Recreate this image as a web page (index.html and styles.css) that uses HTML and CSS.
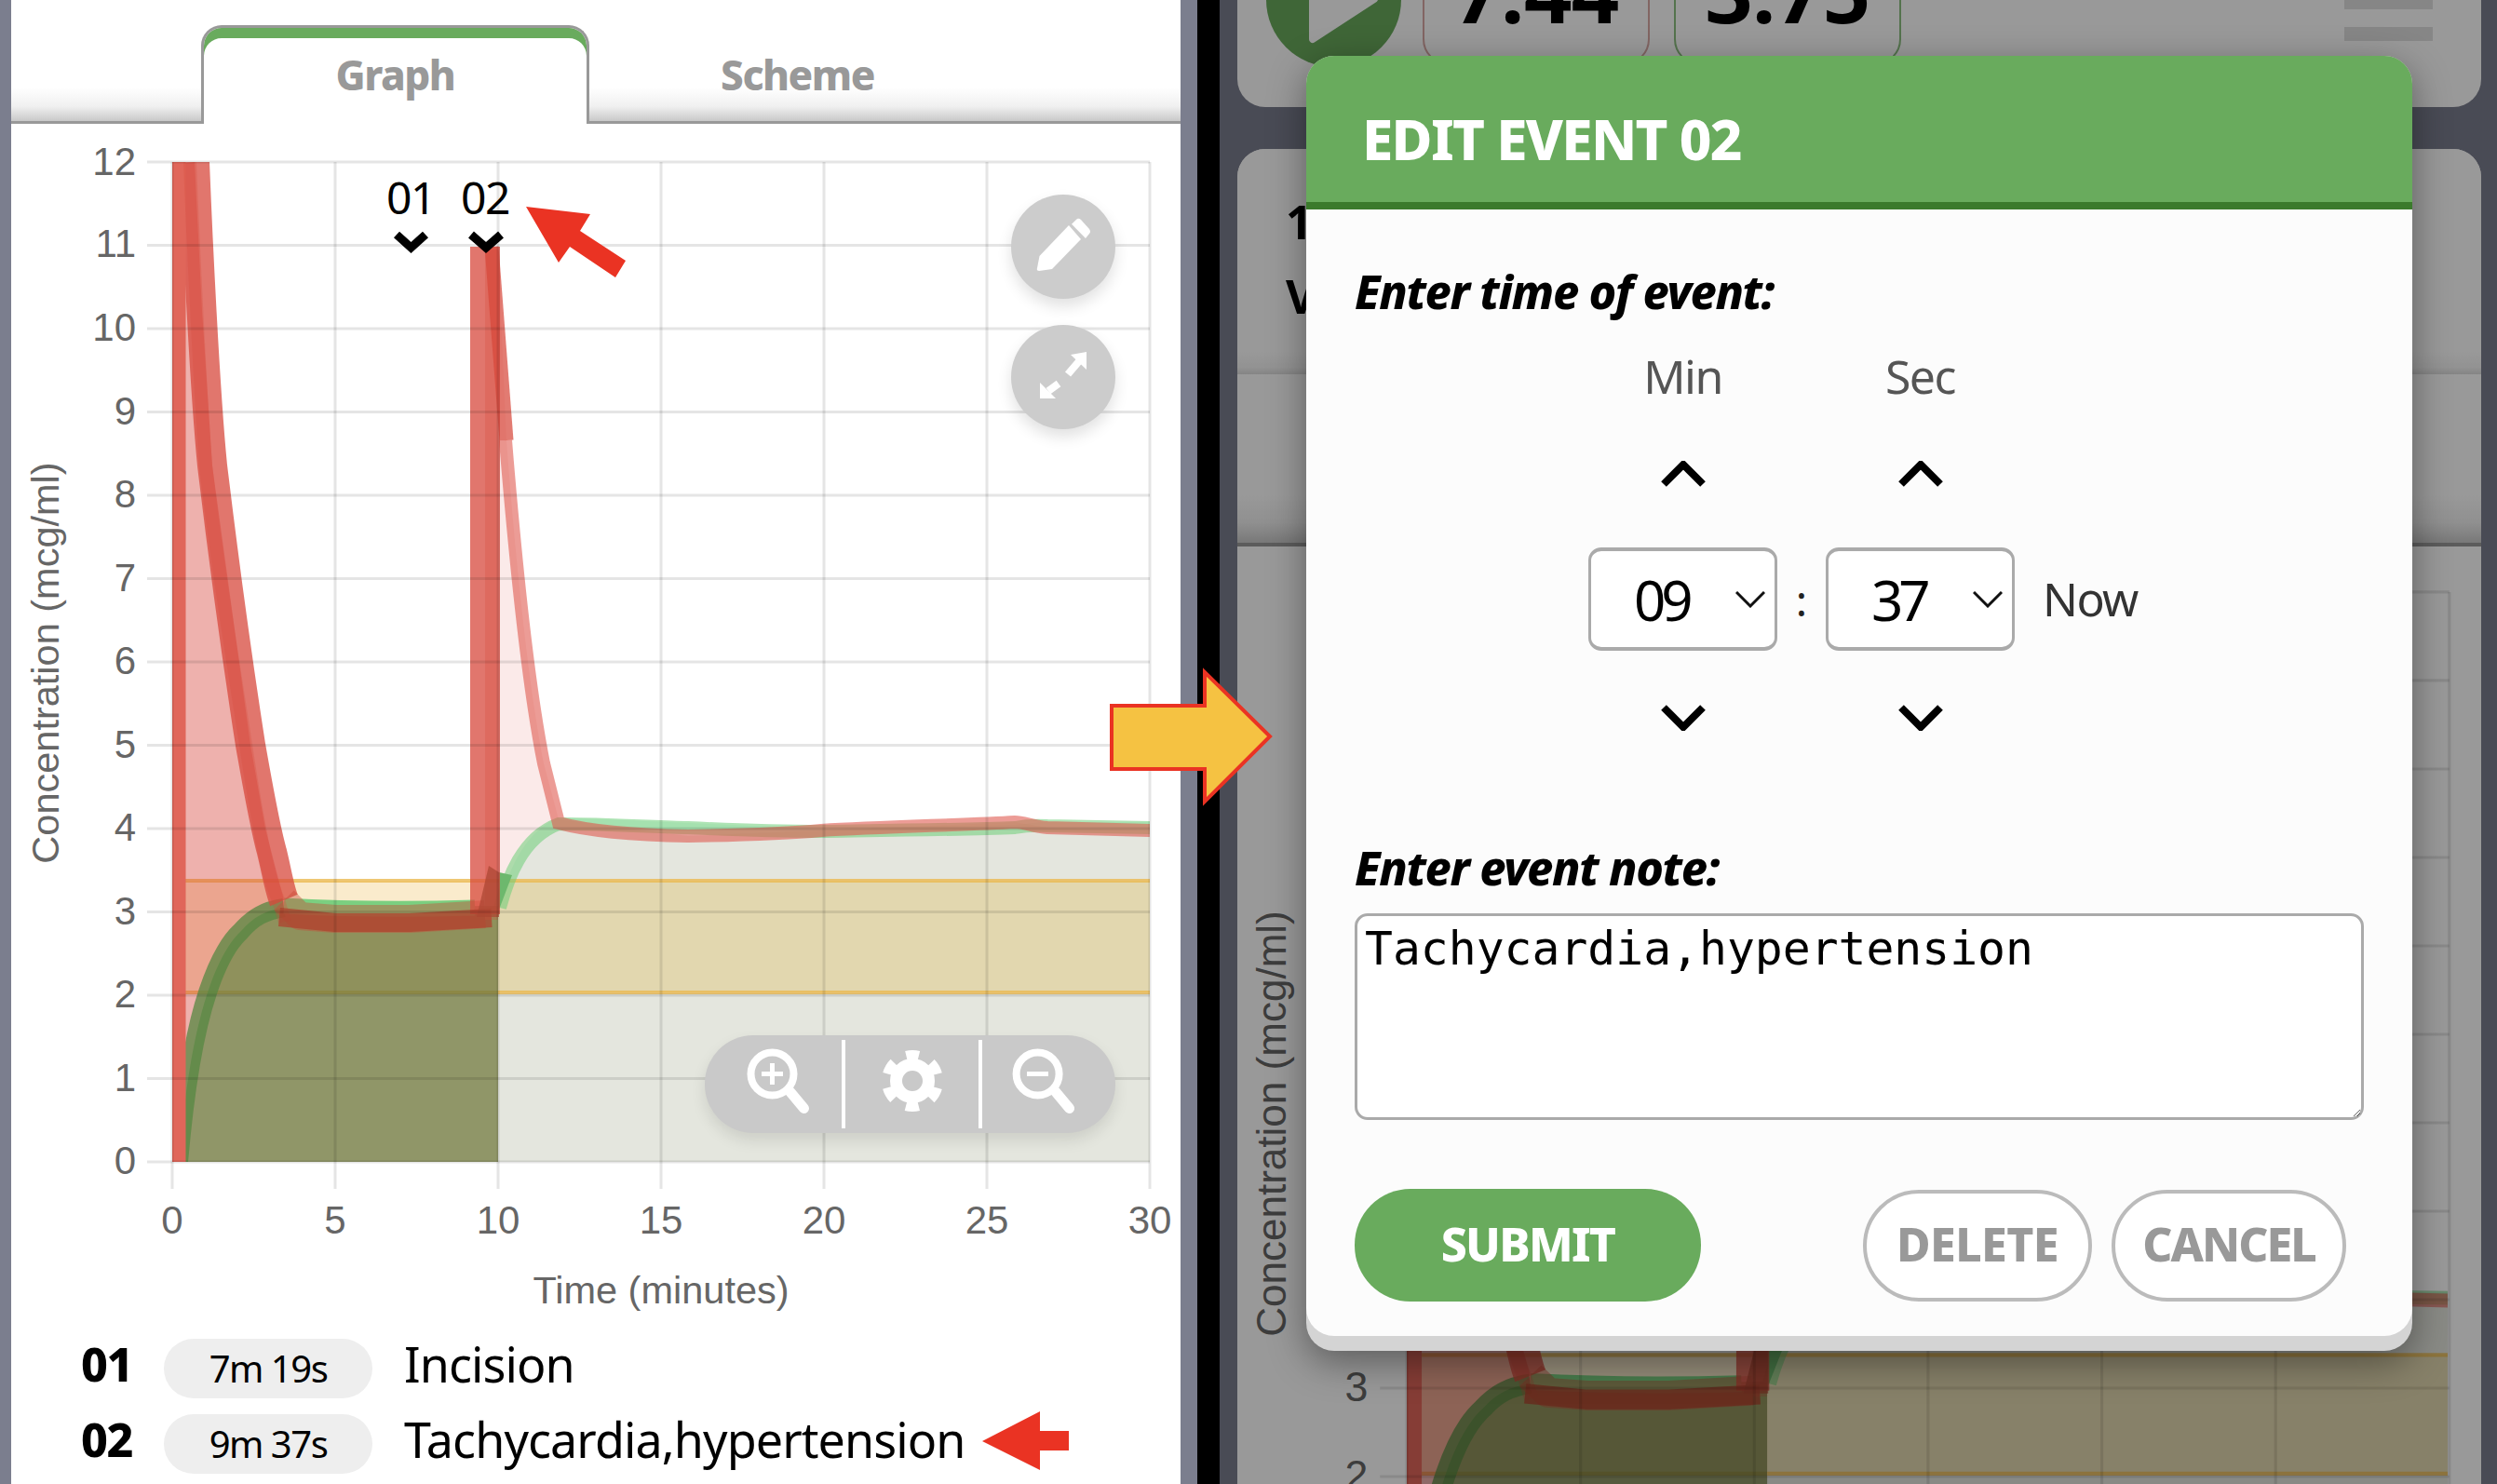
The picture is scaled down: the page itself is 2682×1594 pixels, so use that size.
FILE: index.html
```html
<!DOCTYPE html>
<html lang="en">
<head>
<meta charset="utf-8">
<title>Edit event</title>
<link rel="stylesheet" href="styles.css">
</head>
<body>
<div class="stage">
  <section class="phone-left">
    <nav class="tabs">
      <div class="tab tab-active">Graph</div>
      <div class="tab">Scheme</div>
    </nav>
    <div class="chart">
      <svg class="chart-svg" viewBox="12 133 1256 1290" width="1256" height="1290">
        <defs>
          <clipPath id="plotclip"><rect x="185" y="174" width="1050" height="1074"/></clipPath>
          <clipPath id="bgclip"><rect x="1511" y="632" width="1118" height="962"/></clipPath>
        </defs>
        <g id="plot-data" clip-path="url(#plotclip)">
          <rect class="band-pre" x="185" y="946" width="350" height="120"/>
          <path class="band-line" d="M185 946H535M185 1066H535"/>
          <path class="red-fill" d="M185 1248L192 174L209 174L217 333L228 500L269 800L285 890L305 967L320 982L535 982L535 1248Z"/>
          <path class="olive-fill" d="M192 1248C197 1190 205 1120 223 1066C235 1030 248 1010 259 1000C272 985 285 978 305 975L535 973L535 1248Z"/>
          <path class="pale-red" d="M535 267L544 473C555 620 570 750 584 820L600 880L739 898L882 892L1090 883L1125 889L1235 892L1235 1248L535 1248Z"/>
          <path class="pale-green" d="M535 977C545 940 560 895 600 878L739 884L882 890L1090 886L1119 883L1235 883L1235 1248L535 1248Z"/>
          <rect class="band-post" x="535" y="946" width="700" height="120"/>
          <path class="band-line" d="M535 946H1235M535 1066H1235"/>
          <path class="green-rise" d="M192 1248C197 1190 205 1120 223 1066C235 1030 248 1010 259 1000C272 985 285 978 305 975"/>
          <path class="green-flat" d="M305 973C360 976 440 977 510 975"/>
          <path class="green-post" d="M537 975C545 945 560 900 600 885C650 885 700 888 739 889C800 892 850 893 882 893C950 892 1040 891 1090 889C1100 887 1110 886 1125 887L1235 889"/>
          <polygon class="green-tip" points="536,937 550,940 536,977"/>
          <path class="red-post" d="M543 473C555 620 570 750 584 820L600 884C630 892 680 897 739 898C800 897 850 895 882 892C950 888 1040 886 1090 883C1100 883 1110 888 1125 889L1235 892"/>
          <path class="red-broad" d="M209 174C212 250 220 420 228 500C240 600 255 710 269 800C276 840 285 890 292 915C297 935 300 955 305 967"/>
          <path class="red-spike" d="M192 1248V174"/>
          <path class="red-flat" d="M305 967L322 984L360 987L440 987L521 982"/>
          <path class="red-broad" d="M521 982L521 265"/>
          <path class="red-peak" d="M528 265L544 473"/>
          <path class="red-inner" d="M204 174C207 250 215 420 221 500C232 600 250 710 264 800C270 840 276 875 280 895C285 925 292 950 299 967L306 990"/>
          <path class="red-low" d="M300 985L360 991L440 991L528 986"/>
          <path class="red-inner" d="M528 988L528 268"/>
          <polygon class="red-tip" points="525,930 536,937 536,985 512,985"/>
        </g>
        <g id="plot-frame">
          <path class="grid" d="M158 1248H1235M158 1158.5H1235M158 1069H1235M158 979.5H1235M158 890H1235M158 800.5H1235M158 711H1235M158 621.5H1235M158 532H1235M158 442.5H1235M158 353H1235M158 263.5H1235M158 174H1235"/>
          <path class="grid" d="M185 174V1277M360 174V1277M535 174V1277M710 174V1277M885 174V1277M1060 174V1277M1235 174V1277"/>
          <g class="tick ytick">
            <text x="146" y="1261">0</text><text x="146" y="1172">1</text><text x="146" y="1082">2</text><text x="146" y="993">3</text><text x="146" y="903">4</text><text x="146" y="814">5</text><text x="146" y="724">6</text><text x="146" y="635">7</text><text x="146" y="545">8</text><text x="146" y="456">9</text><text x="146" y="366">10</text><text x="146" y="276">11</text><text x="146" y="188">12</text>
          </g>
          <g class="tick xtick">
            <text x="185" y="1325">0</text><text x="360" y="1325">5</text><text x="535" y="1325">10</text><text x="710" y="1325">15</text><text x="885" y="1325">20</text><text x="1060" y="1325">25</text><text x="1235" y="1325">30</text>
          </g>
          <text class="axis-title" x="710" y="1400">Time (minutes)</text>
          <text class="axis-title" transform="translate(63 712) rotate(-90)">Concentration (mcg/ml)</text>
        </g>
        <g class="markers">
          <text x="441" y="230">01</text><text x="521" y="230">02</text>
          <path class="marker-chev" d="M426 252L441.500 266L457 252M506 252L522 266L538 252"/>
        </g>
      </svg>
      <button class="round-btn round-edit" aria-label="Edit">
        <svg viewBox="0 0 112 112" width="112" height="112"><path class="icon-fill" d="M30.500 66L62 33L75 48L44 80L30 82Q27 82 28 79Z"/><path class="icon-fill" d="M65 31.700L71 26Q73 25 75 27L84 37Q86 40 84 42L80 47Z"/></svg>
      </button>
      <button class="round-btn round-expand" aria-label="Expand">
        <svg viewBox="0 0 112 112" width="112" height="112"><polygon class="icon-fill" points="64,32 81,29 81,48"/><polygon class="icon-fill" points="31,62 31,79 48,79"/><path class="icon-line" d="M73 39L61 53M51 63L40 71"/></svg>
      </button>
      <div class="zoom-pill">
        <div class="zoom-cell">
          <svg viewBox="0 0 80 80" width="80" height="80"><circle class="mag-ring" cx="38.500" cy="28.500" r="23"/><path class="mag-handle" d="M57.500 47.500L72.500 65.500"/><path class="mag-sign" d="M38.500 17V40M27 28.500H50"/></svg>
        </div>
        <div class="zoom-cell">
          <svg viewBox="0 0 80 80" width="80" height="80"><circle class="gear-teeth" cx="40" cy="36" r="28" transform="rotate(-90 40 36)"/><circle class="gear-ring" cx="40" cy="36" r="17.500"/></svg>
        </div>
        <div class="zoom-cell">
          <svg viewBox="0 0 80 80" width="80" height="80"><circle class="mag-ring" cx="27.600" cy="28.500" r="23"/><path class="mag-handle" d="M46.600 47.500L61.600 65.500"/><path class="mag-sign" d="M16 28.500H39"/></svg>
        </div>
      </div>
    </div>
    <ul class="events">
      <li class="event"><b class="event-num">01</b><span class="event-time">7m 19s</span><span class="event-text">Incision</span></li>
      <li class="event"><b class="event-num">02</b><span class="event-time">9m 37s</span><span class="event-text">Tachycardia,hypertension</span></li>
    </ul>
  </section>
  <div class="gutter"></div>
  <div class="divider"></div>
  <section class="phone-right">
    <div class="card card-top">
      <div class="play"><svg viewBox="0 0 145 145" width="145" height="145"><path class="play-tri" d="M50 32L116 72L50 115Z"/></svg></div>
      <div class="stat stat-red">7.44</div>
      <div class="stat stat-green">3.75</div>
      <div class="menu"><i></i><i></i></div>
    </div>
    <div class="card card-main">
      <div class="info">
        <p class="info-line">100 mg</p>
        <p class="info-line">Vd</p>
      </div>
      <div class="info-tabs"></div>
      <svg class="bg-chart" viewBox="1329 587 1336 1007" width="1336" height="1007">
        <g clip-path="url(#bgclip)">
          <use href="#plot-data" transform="translate(1511 1491) scale(1.106 1.0615) translate(-185 -979.500)"/>
        </g>
        <use href="#plot-frame" transform="translate(1511 1491) scale(1.0665 1.0615) translate(-185 -979.500)"/>
      </svg>
    </div>
    <div class="dim"></div>
  </section>

  <form class="modal">
    <h2 class="modal-head">EDIT EVENT 02</h2>
    <div class="modal-body">
      <label class="modal-label">Enter time of event:</label>
      <div class="time-grid">
        <span class="unit">Min</span><span></span><span class="unit">Sec</span><span></span>
        <svg class="step step-up" viewBox="0 0 48 28" width="48" height="28"><path d="M3 25L24 4L45 25"/></svg><span></span>
        <svg class="step step-up" viewBox="0 0 48 28" width="48" height="28"><path d="M3 25L24 4L45 25"/></svg><span></span>
        <div class="select-wrap">
          <select class="select"><option>09</option></select>
          <svg class="select-chev" viewBox="0 0 32 18" width="32" height="18"><path d="M1 1L16 16L31 1"/></svg>
        </div>
        <span class="colon">:</span>
        <div class="select-wrap">
          <select class="select"><option>37</option></select>
          <svg class="select-chev" viewBox="0 0 32 18" width="32" height="18"><path d="M1 1L16 16L31 1"/></svg>
        </div>
        <span class="now">Now</span>
        <svg class="step" viewBox="0 0 48 28" width="48" height="28"><path d="M3 3L24 24L45 3"/></svg><span></span>
        <svg class="step" viewBox="0 0 48 28" width="48" height="28"><path d="M3 3L24 24L45 3"/></svg><span></span>
      </div>
      <label class="modal-label note-label">Enter event note:</label>
      <textarea class="note">Tachycardia,hypertension</textarea>
      <div class="actions">
        <button type="button" class="btn btn-submit">SUBMIT</button>
        <button type="button" class="btn btn-ghost btn-delete">DELETE</button>
        <button type="button" class="btn btn-ghost btn-cancel">CANCEL</button>
      </div>
    </div>
  </form>

  <svg class="annotations" viewBox="0 0 2682 1594" width="2682" height="1594">
    <polygon class="note-red" points="565,222 634,230 623,248 672,280 661,298 612,265 600,282"/>
    <polygon class="note-red" points="1055,1548 1117,1516 1117,1537 1148,1537 1148,1558 1117,1558 1117,1579"/>
    <polygon class="note-yellow" points="1194,758 1294,758 1294,722 1364,791 1294,861 1294,826 1194,826"/>
  </svg>
</div>
</body>
</html>
```

FILE: styles.css
```css
* { box-sizing: border-box; }
html, body { margin: 0; padding: 0; }
body { width: 2682px; height: 1594px; overflow: hidden; font-family: "Noto Sans", "Liberation Sans", sans-serif; }

.stage { position: relative; display: flex; width: 2682px; height: 1594px; overflow: hidden; background: #7b7e8e; }

/* left phone */
.phone-left { margin-left: 12px; width: 1256px; height: 1594px; background: #fff; flex: none; }
.tabs { display: flex; gap: 15px; height: 133px; padding: 27px 0 0 204px; border-bottom: 3px solid #999; background: linear-gradient(to bottom, #fff 72%, #f0f0f0 88%, #c9c9c9 100%); }
.tab { width: 417px; height: 106px; padding-top: 23px; text-align: center; font-size: 44px; line-height: 60px; font-weight: 800; color: #999; letter-spacing: -1.500px; }
.tab-active { border: 3px solid #999; border-bottom: 0; border-radius: 22px 22px 0 0; background: #fff; box-shadow: inset 0 11px 0 #69ab5d; padding-top: 20px; }

.chart { position: relative; height: 1290px; }
.chart-svg { display: block; }
.grid { fill: none; stroke: rgba(0,0,0,.1); stroke-width: 3; }
.tick text { font-family: "Liberation Sans", sans-serif; font-size: 42px; fill: #666; }
.ytick text { text-anchor: end; }
.xtick text { text-anchor: middle; }
.axis-title { font-family: "Liberation Sans", sans-serif; font-size: 41.500px; fill: #666; text-anchor: middle; }
.band-pre { fill: rgba(240,190,85,.3); }
.band-post { fill: rgba(225,195,110,.42); }
.band-line { stroke: rgba(235,185,80,.8); stroke-width: 4; fill: none; }
.red-fill { fill: rgba(215,70,60,.42); }
.olive-fill { fill: rgba(81,131,59,.6); }
.pale-red { fill: rgba(224,80,70,.12); }
.pale-green { fill: rgba(104,206,158,.15); }
.green-rise { fill: none; stroke: rgba(85,135,65,.75); stroke-width: 20; }
.green-flat { fill: none; stroke: #7bcf80; stroke-width: 17; }
.green-post { fill: none; stroke: rgba(110,205,120,.55); stroke-width: 14; }
.green-tip { fill: #6db86d; }
.red-post { fill: none; stroke: rgba(224,90,80,.6); stroke-width: 14; }
.red-broad { fill: none; stroke: rgba(215,72,60,.75); stroke-width: 32; stroke-linejoin: round; }
.red-spike { fill: none; stroke: #e0665a; stroke-width: 15; }
.red-flat { fill: none; stroke: rgba(200,75,55,.42); stroke-width: 30; stroke-linejoin: round; }
.red-peak { fill: none; stroke: rgba(215,72,60,.72); stroke-width: 15; }
.red-inner { fill: none; stroke: rgba(215,70,55,.25); stroke-width: 14; stroke-linejoin: round; }
.red-low { fill: none; stroke: rgba(175,65,45,.75); stroke-width: 20; stroke-linejoin: round; }
.red-tip { fill: rgba(170,70,50,.7); }
.markers text { font-family: "Noto Sans", sans-serif; font-size: 48px; text-anchor: middle; fill: #000; letter-spacing: -1.500px; }
.marker-chev { fill: none; stroke: #000; stroke-width: 9; }

.round-btn { position: absolute; right: 69.600px; width: 112px; height: 112px; padding: 0; border: 0; border-radius: 50%; background: #ccc; box-shadow: 0 8px 16px rgba(0,0,0,.12); }
.round-btn svg { display: block; }
.round-edit { top: 76px; }
.round-expand { top: 216px; }
.icon-fill { fill: #fff; }
.icon-line { fill: none; stroke: #fff; stroke-width: 8; }

.zoom-pill { position: absolute; left: 745px; top: 979px; display: flex; align-items: center; width: 441px; height: 105px; border-radius: 52px; background: #c9c9c9; box-shadow: 0 8px 16px rgba(0,0,0,.1); }
.zoom-cell { display: flex; align-items: center; justify-content: center; height: 95px; }
.zoom-cell:nth-child(1) { width: 147px; }
.zoom-cell:nth-child(2) { border-left: 4px solid #fff; border-right: 4px solid #fff; width: 151px; }
.zoom-cell:nth-child(3) { width: 143px; }
.mag-ring { fill: none; stroke: #fff; stroke-width: 8; }
.mag-handle { fill: none; stroke: #fff; stroke-width: 11; stroke-linecap: round; }
.mag-sign { fill: none; stroke: #fff; stroke-width: 5; }
.gear-teeth { fill: none; stroke: #fff; stroke-width: 10; stroke-dasharray: 14 15.320; stroke-dashoffset: 7; }
.gear-ring { fill: none; stroke: #fff; stroke-width: 13; }

.events { list-style: none; margin: 15px 0 0; padding: 0 0 0 75px; display: flex; flex-direction: column; gap: 17px; }
.event { display: flex; align-items: center; height: 64px; color: #000; }
.event-num { width: 89px; margin-bottom: 10px; font-size: 50px; line-height: 54px; font-weight: 800; letter-spacing: -1.500px; }
.event-time { width: 224px; height: 64px; border-radius: 32px; background: #eee; text-align: center; font-size: 40px; line-height: 64px; letter-spacing: -1.500px; }
.event-text { margin: 0 0 10px 34px; font-size: 52px; line-height: 54px; letter-spacing: -.900px; white-space: nowrap; }

.gutter { width: 18px; flex: none; }
.divider { width: 24px; flex: none; background: #000; }

/* right phone */
.phone-right { position: relative; flex: 1; min-width: 0; height: 1594px; padding: 0 17px 0 19px; overflow: hidden; }
.card { background: #fff; }
.card-top { display: flex; align-items: flex-end; height: 115px; border-radius: 0 0 30px 30px; padding-left: 31px; overflow: hidden; }
.play { width: 145px; height: 145px; margin-bottom: 43px; border-radius: 50%; background: #69ab5d; flex: none; }
.play svg { display: block; }
.play-tri { fill: #fff; stroke: #fff; stroke-width: 8; stroke-linejoin: round; }
.stat { height: 110px; margin-bottom: 45px; width: 244px; border-radius: 0 0 28px 28px; font-size: 90px; font-weight: 700; line-height: 56px; text-align: center; flex: none; letter-spacing: -.500px; overflow: hidden; }
.stat-red { margin-left: 23px; border: 2px solid #d9a9a5; }
.stat-green { margin-left: 26px; border: 2px solid #8cc081; }
.menu { margin: 0 52px 71px auto; display: flex; flex-direction: column; gap: 19px; width: 95px; }
.menu i { display: block; height: 15px; background: #dfdfdf; }

.card-main { margin-top: 45px; height: 1434px; border-radius: 30px 30px 0 0; overflow: hidden; }
.info { height: 242px; padding: 48px 0 0 52px; background: linear-gradient(to bottom, #fff 90%, #f4f4f4 97%, #ddd 100%); }
.info-line { margin: 0 0 20px; font-size: 50px; line-height: 60px; font-weight: 700; }
.info-tabs { height: 185px; border-bottom: 4px solid #999; background: linear-gradient(to bottom, #fff 72%, #f0f0f0 88%, #c9c9c9 100%); }
.bg-chart { display: block; }
.dim { position: absolute; inset: 0; background: rgba(0,0,0,.4); }

/* modal */
.modal { position: absolute; left: 1403px; top: 60px; width: 1188px; height: 1391px; margin: 0; padding-bottom: 16px; border-radius: 30px; background: #d4d4d4; box-shadow: 0 12px 40px rgba(0,0,0,.4); }
.modal-head { height: 165px; margin: 0; padding: 51px 0 0 60px; border-radius: 30px 30px 0 0; border-bottom: 8px solid #3b7a2c; background: #69ab5d; color: #fff; font-size: 60px; line-height: 76px; font-weight: 800; letter-spacing: -1.700px; }
.modal-body { height: 1210px; padding: 58px 52px 0; border-radius: 0 0 30px 30px; background: #fcfcfc; }
.modal-label { display: block; height: 60px; font-size: 50px; line-height: 60px; font-weight: 800; font-style: italic; color: #000; letter-spacing: -1.400px; }
.time-grid { display: grid; grid-template-columns: 203px 52px 203px auto; grid-template-rows: 62px 153px 111px 144px; justify-items: center; align-items: center; margin: 30px 0 0 251px; width: 700px; }
.unit { font-size: 50px; line-height: 60px; color: #555; letter-spacing: -1.500px; }
.step path { fill: none; stroke: #000; stroke-width: 8; }
.step-up { margin-bottom: 6px; }
.select-wrap { position: relative; width: 203px; height: 111px; }
.select { display: block; width: 203px; height: 111px; padding: 0 0 0 46px; appearance: none; -webkit-appearance: none; border: 3px solid #aaa; border-top-width: 4px; border-bottom-width: 4px; border-radius: 14px; background: #fff; font-family: "Noto Sans", sans-serif; font-size: 60px; color: #000; letter-spacing: -5px; }
.select-chev { position: absolute; right: 13px; top: 47px; }
.select-chev path { fill: none; stroke: #111; stroke-width: 3; }
.colon { font-size: 46px; color: #222; }
.now { justify-self: start; margin: 0 0 2px 30px; font-size: 50px; color: #333; letter-spacing: -1.600px; }
.note-label { margin-top: 59px; }
.note { display: block; width: 1084px; height: 222px; margin: 19px 0 0; padding: 6px 8px; border: 3px solid #aaa; border-radius: 14px; background: #fff; font-family: "DejaVu Sans Mono", monospace; font-size: 49.700px; color: #000; }
.actions { display: flex; align-items: center; gap: 21px; margin-top: 74px; padding-right: 19px; }
.btn { height: 120px; border-radius: 60px; font-family: "Noto Sans", sans-serif; font-size: 50px; font-weight: 800; letter-spacing: -1.700px; padding: 0 0 3px; }
.btn-submit { width: 372px; height: 121px; margin-right: auto; border: 0; background: #69ab5d; color: #fff; }
.btn-ghost { border: 4px solid #bbb; background: #fff; color: #999; }
.btn-delete { width: 246px; letter-spacing: -.600px; }
.btn-cancel { width: 252px; letter-spacing: -2px; }

.annotations { position: absolute; left: 0; top: 0; pointer-events: none; }
.note-red { fill: #ea3323; }
.note-yellow { fill: #f5c242; stroke: #ea3323; stroke-width: 4; }
```
